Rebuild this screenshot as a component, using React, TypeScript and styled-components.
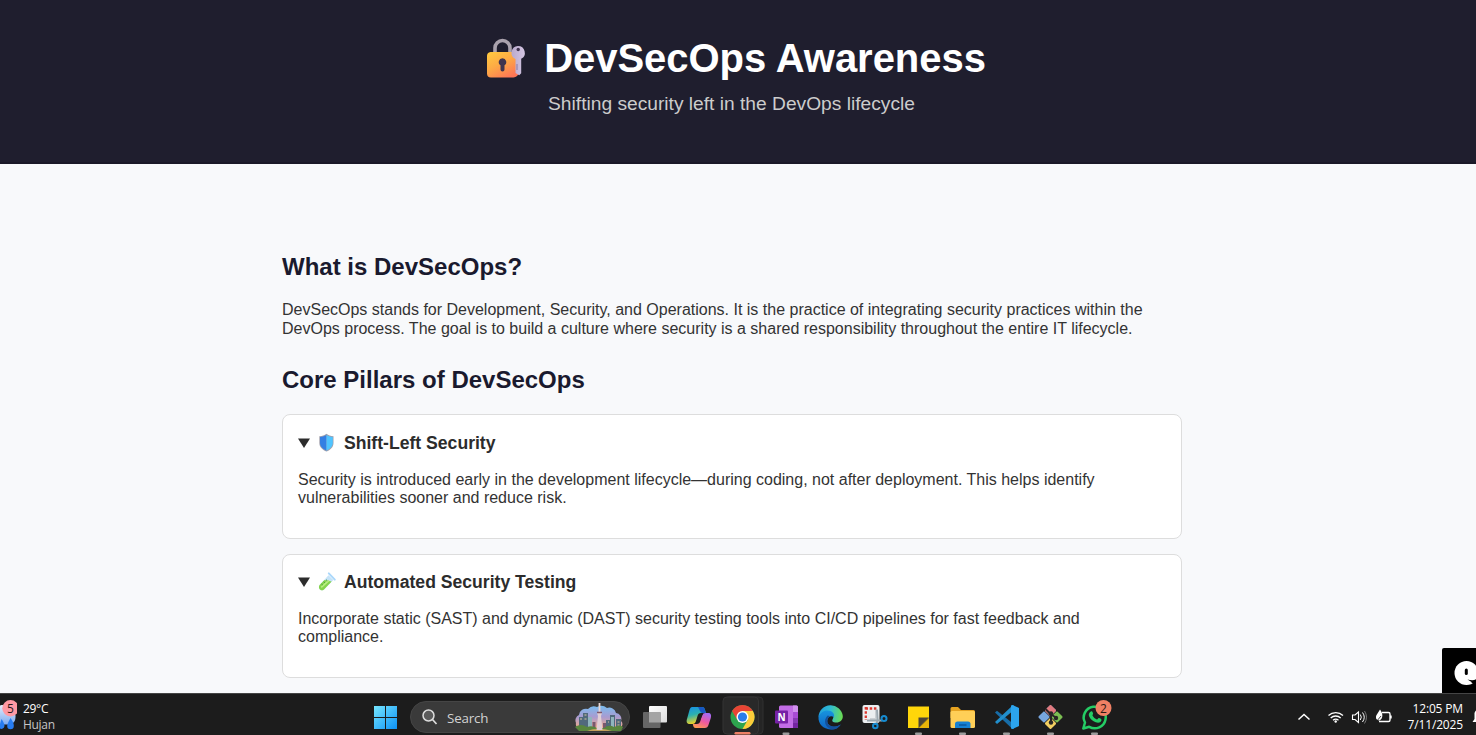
import React from 'react';
import styled, { createGlobalStyle } from 'styled-components';

const GlobalStyle = createGlobalStyle`
  html, body { margin: 0; padding: 0; overflow: hidden; background: #f8f9fb; }
  body { font-family: "Liberation Sans", Arial, sans-serif; color: #333; }
  * { box-sizing: border-box; }
`;

const Screen = styled.div`
  position: relative;
  display: flex;
  flex-direction: column;
  width: 1476px;
  height: 735px;
  overflow: hidden;
  background: #f8f9fb;
`;
const Header = styled.header`
  flex: none;
  height: 164px;
  padding: 33px 13px 0 0;
  background: #1f1e2e;
  border-bottom: 2px solid #1a1928;
  display: flex;
  flex-direction: column;
  align-items: center;
`;
const Title = styled.h1`
  display: flex;
  align-items: center;
  margin: 0;
  height: 50px;
  padding-left: 9px;
  font-size: 40px;
  line-height: 50px;
  letter-spacing: -0.04px;
  color: #fff;
  white-space: nowrap;
  & > svg { margin: 2px 18px 0 0; }
`;
const Subtitle = styled.p`
  margin: 10px 0 0;
  font-size: 19.2px;
  line-height: 22px;
  color: #ccc;
  white-space: nowrap;
`;
const Main = styled.main`
  flex: 1;
  min-height: 0;
  width: 900px;
  margin-left: 282px;
  padding-top: 89px;
`;
const Heading = styled.h2`
  margin: 0;
  font-size: 24px;
  line-height: 28px;
  color: #1a1a2e;
`;
const Paragraph = styled.p`
  margin: 0;
  font-size: 16px;
  line-height: 18.4px;
`;
const Intro = styled(Paragraph)`
  margin: 20.4px 0 27.8px;
`;
const Line = styled.span`
  display: block;
  white-space: nowrap;
`;
const Card = styled.section<{ $h: number; $top: number }>`
  height: ${p => p.$h}px;
  padding: ${p => p.$top}px 15px 0;
  margin-bottom: 15px;
  background: #fff;
  border: 1px solid #ddd;
  border-radius: 8px;
`;
const Cards = styled.div`
  margin-top: 20px;
`;
const Summary = styled.h3`
  display: flex;
  align-items: center;
  height: 20px;
  margin: 0 0 18px;
  font-size: 17.6px;
  line-height: 20px;
  color: #2c2c2c;
  white-space: nowrap;
  & > svg:first-child { margin-right: 7px; }
  & > svg:nth-child(2) { margin-right: 9px; }
`;
const Widget = styled.div`
  position: absolute;
  right: 0;
  bottom: 42px;
  width: 34px;
  height: 45px;
  background: #000;
  border-top-left-radius: 2px;
  overflow: hidden;
`;
const Taskbar = styled.footer`
  flex: none;
  display: flex;
  height: 42px;
  background: #1c1c1c;
  border-top: 1px solid #454545;
  color: #fff;
  font-family: "Open Sans", "Noto Sans", sans-serif;
  font-size: 12px;
  & svg { display: block; }
`;
const Weather = styled.div`
  display: flex;
  width: 363px;
`;
const WeatherText = styled.div`
  padding: 7px 0 0 6px;
  line-height: 16px;
  letter-spacing: -0.3px;
  & > span { display: block; }
  & > span + span { color: #c6c6c6; }
`;
const Slot = styled.div`
  flex: none;
  width: 44px;
  height: 41px;
`;
const SearchBox = styled.div`
  flex: none;
  display: flex;
  align-items: center;
  width: 220px;
  height: 32px;
  margin: 7px 3px 0;
  padding: 0 4px 0 11px;
  border-radius: 16px;
  background: #3a3a3a;
  border: 1px solid #454545;
  font-size: 13.4px;
  letter-spacing: -0.2px;
  color: #d2d2d2;
  & > span { margin: 1px auto 0 9px; }
`;
const Tray = styled.div`
  display: flex;
  flex: 1;
  justify-content: flex-end;
`;
const Clock = styled.div`
  width: 69px;
  padding-top: 7px;
  line-height: 16px;
  letter-spacing: -0.15px;
  text-align: right;
  white-space: nowrap;
  & > span { display: block; }
`;

const LockIcon = () => (
  <svg width="40" height="42" viewBox="0 0 40 42">
    <defs>
      <linearGradient id="lk" x1="0" y1="0" x2=".7" y2="1"><stop stopColor="#ffcb3f" /><stop offset=".5" stopColor="#fdaa45" /><stop offset="1" stopColor="#ff7656" /></linearGradient>
      <linearGradient id="ky" x1="0" y1="0" x2="1" y2="0"><stop stopColor="#b9a9cc" /><stop offset="1" stopColor="#d4c6e3" /></linearGradient>
    </defs>
    <path d="M9 17v-7a7.500 7.500 0 0 1 15 0v7" fill="none" stroke="#aaa2ad" strokeWidth="3.600" />
    <path d="M4.500 14h24a4 4 0 0 1 4 4v16.500a5 5 0 0 1-5 5H5a4 4 0 0 1-4-4V18a4 4 0 0 1 3.500-4z" fill="url(#lk)" />
    <path d="M16.500 20.200a3.800 3.800 0 0 1 2 7v4.300a2 2 0 0 1-4 0v-4.300a3.800 3.800 0 0 1 2-7z" fill="#40344f" />
    <path d="M32 8a6.800 6.800 0 0 1 3.200 12.800v14.400l-2 2-3.700-2.300V21A6.800 6.800 0 0 1 32 8z" fill="url(#ky)" />
    <path d="M31 26v6" stroke="#8d7ba3" strokeWidth="1" />
    <circle cx="32.200" cy="11.500" r="1.700" fill="#40344f" />
  </svg>
);
const Triangle = () => (
  <svg width="13" height="12" viewBox="0 0 13 12"><path d="M0 1.500h12L6 11z" fill="#2c2c2c" /></svg>
);
const ShieldIcon = () => (
  <svg width="17" height="20" viewBox="0 0 17 20">
    <path d="M8.500 .8C10.500 2.500 12.500 2.900 15.500 3.200V10c0 4.300-3.300 7-7 8.600C4.800 17 1.300 14.300 1.300 10V3.200C4.300 2.900 6.500 2.500 8.500 .8z" fill="#a2a0ac" />
    <path d="M8.500 1.800v15.900C5 16.100 2 13.600 2 10V4C4.800 3.700 6.700 3.200 8.500 1.800z" fill="#347fe3" />
    <path d="M8.500 1.800v15.900c3.300-1.600 6.300-4.100 6.300-7.700V4C12 3.700 10.300 3.200 8.500 1.800z" fill="#50c4ff" />
  </svg>
);
const TubeIcon = () => (
  <svg width="17" height="20" viewBox="0 0 17 20" overflow="visible">
    <path d="M10.500 3.300l4.800 4.800L6 17.400c-3 2.600-6.600-1-4.400-4.400z" fill="#c5e3f8" />
    <path d="M6.500 8l7.200 1.600L6 17.400c-3 2.600-6.600-1-4.400-4.400z" fill="#86d44c" />
    <path d="M3.200 15.400l7.800-7" stroke="#b9ef83" strokeWidth="1.600" />
    <path d="M10.800 1.400l6 6.200" stroke="#abd8fb" strokeWidth="2" strokeLinecap="round" />
    <path d="M3.500 12l1.300 1M5.700 9.800l1.300 1M8 7.700l1.300 1" stroke="#46963f" strokeWidth=".9" />
  </svg>
);
const ChatGlyph = () => (
  <svg width="34" height="45" viewBox="0 0 34 45">
    <circle cx="24.500" cy="25" r="12" fill="#fff" />
    <rect x="22.800" y="20.500" width="3" height="6.500" rx="1.500" />
    <path d="M25.500 31.500q6 1.500 9-.5v6q-6-2-5-3z" />
  </svg>
);
const RainIcon = () => (
  <svg width="17" height="41" viewBox="0 0 17 41">
    <defs><linearGradient id="rc" x1="0" y1="0" x2="0" y2="1"><stop stopColor="#e2eefc" /><stop offset="1" stopColor="#7daaf0" /></linearGradient></defs>
    <path d="M-4 15a7 7 0 0 1 12-1 8 8 0 0 1 7.500 9c0 6-4 7.500-8 7.500H-4z" fill="url(#rc)" />
    <path d="M1.500 25c2 3 3 5 3 7a3 3 0 0 1-5.500 1.500zM10.500 24c2.500 3.500 3.500 6 3.300 8a3.300 3.300 0 0 1-6.600 0c0-2 1.500-4.500 3.300-8z" fill="#277cf0" />
    <circle cx="10.500" cy="14.300" r="8.200" fill="#ff99a4" />
    <text x="10.500" y="18.700" fontSize="12" textAnchor="middle" fill="#2a1a1c" fontFamily="Open Sans">5</text>
  </svg>
);
const S = ({ children }: { children: React.ReactNode }) => (
  <Slot><svg width="44" height="41" viewBox="0 1 44 41">{children}</svg></Slot>
);
const Dot = ({ x = 21 }: { x?: number }) => <rect x={x - 3.5} y="39.500" width="7" height="2.500" rx="1" fill="#9b9b9b" />;

const WindowsIcon = () => (
  <S>
    <defs><linearGradient id="wn" gradientUnits="userSpaceOnUse" x1="11" y1="13" x2="34" y2="36"><stop stopColor="#76e6ff" /><stop offset="1" stopColor="#0c91f5" /></linearGradient></defs>
    <path d="M11 13h11v11H11zM23 13h11v11H23zM11 25h11v11H11zM23 25h11v11H23z" fill="url(#wn)" />
  </S>
);
const CityIcon = () => (
  <svg width="50" height="30" viewBox="0 0 50 30">
    <defs>
      <linearGradient id="sky" x1="0" y1="0" x2="0" y2="1"><stop stopColor="#79bcef" /><stop offset=".5" stopColor="#a99bd0" /><stop offset="1" stopColor="#f2ab8a" /></linearGradient>
    </defs>
    <path d="M1 21a6 6 0 0 1 3-8 7 7 0 0 1 9-6 8 8 0 0 1 9-2 9 9 0 0 1 10 1 7 7 0 0 1 9 5 6 6 0 0 1 5 8 4 4 0 0 1-2 7H4a4 4 0 0 1-3-5z" fill="url(#sky)" />
    <path d="M4 27V15h4v-4h5v16zM31 27v-9h4v-5h5v14zM41 27V17h5v10z" fill="#51697c" />
    <path d="M13 27V15h4v12zM36 27V15h3v12z" fill="#90b5bd" />
    <path d="M17.500 27v-7h3v7zM28 27v-6h3v6z" fill="#79596e" />
    <path d="M5 17h2M9.500 13h2M9.500 17h2M33 20h1M42.500 20h2M42.500 23h2" stroke="#d6c59f" />
    <path d="M0 25q6-4 12 0 5-2 10 1h7q5-4 10-1 6-3 9 0l-2 4H4z" fill="#59863d" />
    <path d="M12 29q11-5 25 0z" fill="#c3a15c" />
    <path d="M24.500 1v5M24.500 5v23" stroke="#e8d7d6" strokeWidth="1.800" />
    <path d="M22 11h5l-1 3h-3zM23 14h3l1.500 14h-6z" fill="#e1cfd5" />
    <path d="M22 10.500h5" stroke="#815769" strokeWidth="1.500" />
  </svg>
);
const TaskViewIcon = () => (
  <S>
    <defs><linearGradient id="tv" x1="0" y1="0" x2="1" y2="1"><stop stopColor="#fff" /><stop offset="1" stopColor="#dcdcdc" /></linearGradient></defs>
    <rect x="16" y="13" width="18" height="16.500" rx="1" fill="url(#tv)" />
    <rect x="10" y="19" width="17.500" height="16" rx="1" fill="#666" />
    <path d="M16 19h11.500v10.500H16z" fill="#a4a4a4" />
  </S>
);
const CopilotIcon = () => (
  <S>
    <defs>
      <linearGradient id="c1" x1="0" y1="0" x2=".3" y2="1"><stop stopColor="#168fe9" /><stop offset=".5" stopColor="#2bb1b0" /><stop offset="1" stopColor="#f4d321" /></linearGradient>
      <linearGradient id="c2" x1=".7" y1="0" x2=".2" y2="1"><stop stopColor="#a56af3" /><stop offset=".5" stopColor="#ef58a0" /><stop offset="1" stopColor="#ff9c4d" /></linearGradient>
    </defs>
    <path d="M15 14h10c2 0 2.500 1 3 3l1 3h-5c-2 0-3 1-3.500 3l-1.500 5c-.7 2-1.500 3-3.500 3H13c-3 0-4-2-3-5l2.500-9c.6-2 1.500-3 2.500-3z" fill="url(#c1)" />
    <path d="M21 14h4c2 0 2.500 1 3 3l1 3h-4c-2-.5-2-3-4-6z" fill="#1757c3" />
    <path d="M28.500 20H31c3 0 3.500 2 2.800 5l-2 6c-.9 3-2 4-4 4h-9c-2 0-2.500-1.500-3-4h4c2 0 3-1 3.600-3l1.500-5c.5-2 1.600-3 3.600-3z" fill="url(#c2)" />
    <path d="M23 21l3 0-4 8-3 0z" fill="#1c1c1c" />
  </S>
);
const ChromeIcon = () => (
  <S>
    <rect x="4" y="4" width="38" height="37" rx="4" fill="#252525" stroke="#303030" />
    <rect x="2" y="4" width="35.500" height="37" rx="4" fill="#292929" stroke="#343434" />
    <circle cx="21.500" cy="24" r="12" fill="#2da44e" />
    <path d="M11.100 18a12 12 0 0 1 20.800 0H21.500l-5.200 9z" fill="#e84435" />
    <path d="M31.900 18a12 12 0 0 1-10.400 18l5.200-9-5.200-9z" fill="#fdcc3a" />
    <circle cx="21.500" cy="24" r="6" fill="#fff" /><circle cx="21.500" cy="24" r="4.600" fill="#2b7de9" />
    <rect x="13.500" y="39" width="16" height="2.500" rx="1.200" fill="#ee8066" />
  </S>
);
const OneNoteIcon = () => (
  <S>
    <rect x="14" y="12.500" width="19" height="22.500" rx="1.500" fill="#c26ce5" />
    <path d="M28 12.500h3.500a1.500 1.500 0 0 1 1.500 1.500v5h-5z" fill="#d191ee" /><path d="M28 19h5v6h-5z" fill="#a94bd5" /><path d="M28 25h5v5h-5z" fill="#8739b3" /><path d="M28 30h5v3.500a1.500 1.500 0 0 1-1.500 1.500H28z" fill="#7424a1" />
    <rect x="10" y="17.500" width="13" height="13" rx="1" fill="#7621a5" />
    <text x="16.500" y="27.700" fontSize="10" fontWeight="700" textAnchor="middle" fill="#fff" fontFamily="Open Sans">N</text>
    <Dot />
  </S>
);
const EdgeIcon = () => (
  <S>
    <defs>
      <linearGradient id="e1" x1="0" y1=".2" x2="1" y2=".3"><stop stopColor="#209fdf" /><stop offset=".5" stopColor="#31bdd0" /><stop offset="1" stopColor="#69db55" /></linearGradient>
      <linearGradient id="e2" x1="0" y1="0" x2="0" y2="1"><stop stopColor="#1794df" /><stop offset="1" stopColor="#0f64c2" /></linearGradient>
    </defs>
    <path d="M9.500 24a12.200 12.200 0 0 1 24.300-1c.2 4-2.800 6.500-6.300 6.500-4 0-5-1.500-3.700-3.500 2-3-1.200-6.500-5.500-6.500-4 0-7 2-8.800 4.500z" fill="url(#e1)" />
    <path d="M9.500 24c1.500-4 5-6.500 8.800-6.500 5 0 8 3.500 6.500 7-2-2.500-6-1-6.500 3-.6 5 6 8.800 13.500 4-3 4-6.500 5.300-10.500 5C14.500 36 9 31 9.500 24z" fill="url(#e2)" />
    <path d="M18.700 22.500c-5 5-2.700 12 4.300 14 4 0 7-2 8.800-5-7 4.500-14 1-13.500-4 .1-2 1-3.500 2.500-4.300z" fill="#14509b" />
  </S>
);
const SnipIcon = () => (
  <S>
    <rect x="9.500" y="12" width="17" height="18" rx="2" fill="#eceff1" />
    <path d="M12.500 15.500h11M12.800 14v13" fill="none" stroke="#db382f" strokeWidth="2.300" strokeDasharray="2.500 1.700" />
    <path d="M23 17v9l-6 0" fill="none" stroke="#cbd0d4" strokeWidth="2" />
    <path d="M24 16.500l.7 10.500-1.700 5M14 27.500l15 0" stroke="#9ba8b0" strokeWidth="1.900" fill="none" />
    <circle cx="22.300" cy="33" r="2.300" fill="none" stroke="#168bd0" strokeWidth="2" /><circle cx="31" cy="25.500" r="2.500" fill="none" stroke="#168bd0" strokeWidth="2" />
  </S>
);
const StickyIcon = () => (
  <S>
    <path d="M11 13.500h21V25L21.500 35H11z" fill="#ffd60a" /><path d="M32 25v10H21.500z" fill="#eab409" /><path d="M21.500 24.500H32L21.500 35z" fill="#4c4437" /><Dot x={21.5} />
  </S>
);
const FolderIcon = () => (
  <S>
    <path d="M9.500 15.500a1.500 1.500 0 0 1 1.500-1.500h6l3 3h12.500a1.500 1.500 0 0 1 1.500 1.500V25H9.500z" fill="#e6a321" />
    <rect x="9.500" y="18" width="24.500" height="17" rx="1.500" fill="#ffcf57" />
    <path d="M14 35v-4a2.500 2.500 0 0 1 2.500-2.500H27a2.500 2.500 0 0 1 2.500 2.500v4z" fill="#1681d3" /><path d="M18 32h7.500" stroke="#0b579e" strokeWidth="1.500" /><Dot x={21.5} />
  </S>
);
const CodeIcon = () => (
  <S>
    <path d="M10 19.500l2-1.700L29 31.300v4.700h-1.500z" fill="#176da8" /><path d="M10 29l2 1.900L29 17v-4.500h-1.500z" fill="#218fcd" />
    <path d="M27.500 12l6.500 3v18l-6.500 3-1.500-.6V12.600z" fill="#2ca4ed" /><Dot x={21.5} />
  </S>
);
const GitIcon = () => (
  <S>
    <g transform="rotate(45 21.500 24)">
      <rect x="12.800" y="15.300" width="8.200" height="8.200" rx="1" fill="#77a6df" /><rect x="22" y="15.300" width="8.200" height="8.200" rx="1" fill="#7bbe53" /><rect x="12.800" y="24.500" width="8.200" height="8.200" rx="1" fill="#77a6df" /><rect x="22" y="24.500" width="8.200" height="8.200" rx="1" fill="#f3cf62" />
      <path d="M13.800 15.300H20a1 1 0 0 1 1 1v6.200a1 1 0 0 1-1 1h-6.200a1 1 0 0 1-1-1v-6.200a1 1 0 0 1 1-1z" fill="#e17a7f" />
    </g>
    <g transform="rotate(45 21.500 24)">
      <rect x="12.800" y="15.300" width="8.200" height="8.200" rx="1" fill="#e17a7f" /><rect x="22" y="15.300" width="8.200" height="8.200" rx="1" fill="#7bbe53" /><rect x="12.800" y="24.500" width="8.200" height="8.200" rx="1" fill="#77a6df" /><rect x="22" y="24.500" width="8.200" height="8.200" rx="1" fill="#f3cf62" />
    </g>
    <path d="M16.500 16l5.500 5.500v8M22 21.500l5 3" fill="none" stroke="#272525" strokeWidth="2" /><circle cx="22" cy="20.500" r="2.200" fill="#272525" /><circle cx="22" cy="29.500" r="2.200" fill="#272525" /><circle cx="27" cy="25" r="2.200" fill="#272525" /><Dot x={21.5} />
  </S>
);
const WhatsIcon = () => (
  <S>
    <path d="M10.300 35.500l1.700-6a11 10.800 0 1 1 4.200 4.300z" fill="#1c1c1c" stroke="#24cc64" strokeWidth="2.500" strokeLinejoin="round" />
    <path d="M17.500 18.700c1.500-1 2 0 2.500 1.500.5 1-.8 1.600-.5 2.300 1 2 2.500 3.200 4.400 4 .7.200 1.200-1.700 2-1.500 1.300.4 3 1.100 2.600 2.200-.6 2.500-3.400 3-5.800 2-3-1-5.200-3-6.500-5.800-.8-1.700-.5-3.500 1.300-4.700z" fill="#24cc64" />
    <circle cx="30.500" cy="15" r="8" fill="#f08064" />
    <text x="30.500" y="19.500" fontSize="12" textAnchor="middle" fill="#2a1a14" fontFamily="Open Sans">2</text><Dot x={21.5} />
  </S>
);
const TrayIcons = () => (
  <svg width="100" height="41" viewBox="1294 694 100 41" fill="none" stroke="#fff" strokeWidth="1.300">
    <path d="M1298.500 719.500l5.500-5 5.500 5" strokeWidth="1.500" />
    <path d="M1328.500 715.500a10.500 10.500 0 0 1 14.500 0M1330.700 718a7.300 7.300 0 0 1 10 0M1333 720.300a4.300 4.300 0 0 1 5.500 0" /><circle cx="1335.700" cy="721.500" r="1.200" fill="#fff" stroke="none" />
    <path d="M1352.500 715h2.500l3.500-3v10.500l-3.500-3h-2.500z" strokeWidth="1.100" /><path d="M1360.300 714.500q2 2.700 0 5.500M1362.500 712.500q3.500 4.600 0 9.500" strokeWidth="1" /><path d="M1364.500 711q4 6 0 12.500" stroke="#777" strokeWidth="1" />
    <path d="M1382 712.500h6.500a1.500 1.500 0 0 1 1.500 1.500v6a1.500 1.500 0 0 1-1.500 1.500H1379M1391 715.500v3" strokeWidth="1.400" />
    <path d="M1380 709.500c3 3.500 3.500 9-.5 11-4 0-4.500-4-2-7z" fill="#fff" stroke="none" /><path d="M1376 722l5-6" stroke="#1c1c1c" strokeWidth=".8" />
  </svg>
);
const Bell = () => (
  <svg width="13" height="41" viewBox="1463 694 13 41"><path d="M1472.500 722l2-3v-6q1-3 3-3v12z" fill="#fff" /></svg>
);

export default function App() {
  return (
    <>
      <GlobalStyle />
      <Screen>
        <Header>
          <Title><LockIcon />DevSecOps Awareness</Title>
          <Subtitle>Shifting security left in the DevOps lifecycle</Subtitle>
        </Header>
        <Main>
          <Heading>What is DevSecOps?</Heading>
          <Intro>
            <Line>DevSecOps stands for Development, Security, and Operations. It is the practice of integrating security practices within the</Line>
            <Line>DevOps process. The goal is to build a culture where security is a shared responsibility throughout the entire IT lifecycle.</Line>
          </Intro>
          <Heading>Core Pillars of DevSecOps</Heading>
          <Cards>
            <Card $h={125} $top={18}>
              <Summary><Triangle /><ShieldIcon />Shift-Left Security</Summary>
              <Paragraph>
                <Line>Security is introduced early in the development lifecycle—during coding, not after deployment. This helps identify</Line>
                <Line>vulnerabilities sooner and reduce risk.</Line>
              </Paragraph>
            </Card>
            <Card $h={124} $top={17}>
              <Summary><Triangle /><TubeIcon />Automated Security Testing</Summary>
              <Paragraph>
                <Line>Incorporate static (SAST) and dynamic (DAST) security testing tools into CI/CD pipelines for fast feedback and</Line>
                <Line>compliance.</Line>
              </Paragraph>
            </Card>
          </Cards>
        </Main>
        <Taskbar>
          <Weather>
            <RainIcon />
            <WeatherText><span>29°C</span><span>Hujan</span></WeatherText>
          </Weather>
          <WindowsIcon />
          <SearchBox>
            <svg width="16" height="16" viewBox="0 0 16 16"><circle cx="6.500" cy="6.500" r="5.500" fill="#5b5b5b" stroke="#ddd" strokeWidth="1.500" /><path d="M10.500 10.500l4 4.500" stroke="#ddd" strokeWidth="1.700" /></svg>
            <span>Search</span>
            <CityIcon />
          </SearchBox>
          <TaskViewIcon />
          <CopilotIcon />
          <ChromeIcon />
          <OneNoteIcon />
          <EdgeIcon />
          <SnipIcon />
          <StickyIcon />
          <FolderIcon />
          <CodeIcon />
          <GitIcon />
          <WhatsIcon />
          <Tray>
            <TrayIcons />
            <Clock><span>12:05 PM</span><span>7/11/2025</span></Clock>
            <Bell />
          </Tray>
        </Taskbar>
        <Widget><ChatGlyph /></Widget>
      </Screen>
    </>
  );
}
